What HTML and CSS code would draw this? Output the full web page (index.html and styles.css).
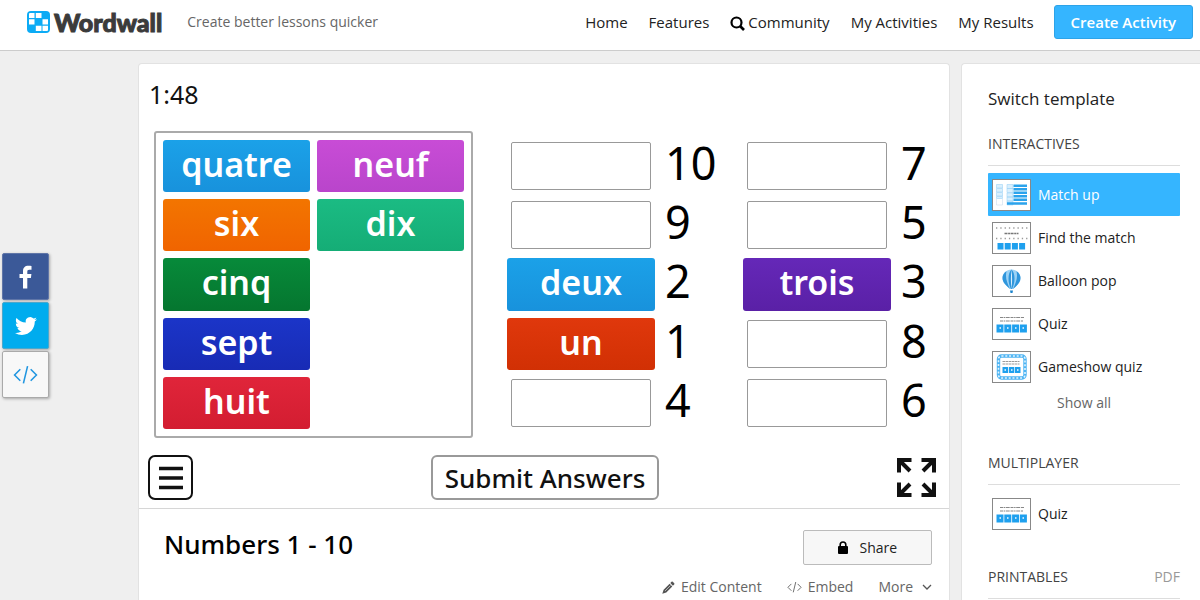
FILE: index.html
```html
<!DOCTYPE html>
<html lang="en">
  <head>
    <meta charset="UTF-8" />
    <meta name="viewport" content="width=device-width, initial-scale=1.0" />
    <title>Numbers 1 - 10</title>
    <link rel="stylesheet" href="styles.css">
  </head>
  <body>
    <!-- shapes used more than once -->
    <svg class="defs" aria-hidden="true">
      <symbol id="code" viewBox="0 0 24 18">
        <path d="M7 4 1.500 9.500 7 15M17 4l5.500 5.500L17 15M14 1 10 17.500" fill="none" stroke="currentColor" stroke-width="1.500" />
      </symbol>
      <symbol id="quiz-thumb" viewBox="0 0 37 30">
        <path d="M7 8.500h24M7 12h23" stroke="#888" stroke-width="1.200" stroke-dasharray="3 .6 1.500 .6 4 .8" />
        <path d="M3.500 15.500h7v8h-7zM11.300 15.500h7v8h-7zM19.100 15.500h7v8h-7zM26.900 15.500h7v8h-7z" fill="#1ea0ee" />
        <path d="M6.500 19h1.500M14 19h1.500M22 19h1.500M29.500 19h1.500" stroke="#bfe4fc" stroke-width="2" />
      </symbol>
    </svg>

    <header class="topbar">
      <a href="#" class="logo">
        <svg width="23" height="22" viewBox="0 0 23 22" aria-hidden="true">
          <rect width="23" height="22" rx="4" fill="#0cabf5" />
          <path d="M3 2h4.500v5H2V3q0-1 1-1zM8.800 2h5.700v5H8.800zM2 8.200h5.500v5.300H2zM15.500 8.200H21v5.300h-5.500zM8.800 14.700h5.700V20H8.800zM15.500 14.700H21V19q0 1-1 1h-4.500z" fill="#fff" />
        </svg>
        <span class="wordmark">Wordwall</span>
      </a>
      <span class="slogan">Create better lessons quicker</span>
      <nav class="nav">
        <a href="#">Home</a>
        <a href="#">Features</a>
        <a href="#"><svg class="search" width="15" height="15" viewBox="0 0 15 15" aria-hidden="true"><circle cx="6.500" cy="6.500" r="5" fill="none" stroke="#000" stroke-width="2.200" /><path d="m10 10 4 4" stroke="#000" stroke-width="2.600" /></svg>Community</a>
        <a href="#">My Activities</a>
        <a href="#">My Results</a>
      </nav>
      <button class="create">Create Activity</button>
    </header>

    <div class="social">
      <a href="#" class="social-btn facebook" aria-label="Facebook">
        <svg width="14" height="24" viewBox="0 0 14 24"><path d="M4 23.500V13H.5V9H4V6.200C4 2.700 6 .8 9.300.8c1.500 0 2.900.1 3.200.2v3.700h-2.200C8.600 4.700 8.300 5.500 8.300 6.700V9h4.100l-.5 4H8.300v10.500z" fill="#fff" /></svg>
      </a>
      <a href="#" class="social-btn twitter" aria-label="Twitter">
        <svg width="22" height="22" viewBox="0 0 24 24"><path d="M23.950 4.570a10 10 0 0 1-2.820.77 4.960 4.960 0 0 0 2.160-2.720c-.95.550-2 .95-3.130 1.180a4.920 4.920 0 0 0-8.380 4.480C7.690 8.090 4.070 6.130 1.640 3.160a4.820 4.820 0 0 0-.67 2.480c0 1.710.87 3.210 2.190 4.100a4.900 4.900 0 0 1-2.230-.62v.06a4.920 4.920 0 0 0 3.950 4.830 5 5 0 0 1-2.210.08 4.940 4.940 0 0 0 4.600 3.420A9.870 9.870 0 0 1 0 19.540a13.940 13.940 0 0 0 7.550 2.210c9.050 0 14-7.500 14-13.980 0-.21 0-.42-.02-.63a9.940 9.940 0 0 0 2.460-2.550z" fill="#fff" /></svg>
      </a>
      <a href="#" class="social-btn embed" aria-label="Embed">
        <svg width="25" height="19"><use href="#code" /></svg>
      </a>
    </div>

    <div class="page">
      <main class="activity">
        <div class="timer">1:48</div>
        <div class="board">
          <div class="tray">
            <button class="tile blue">quatre</button>
            <button class="tile pink">neuf</button>
            <button class="tile orange">six</button>
            <button class="tile mint">dix</button>
            <button class="tile green first">cinq</button>
            <button class="tile navy first">sept</button>
            <button class="tile red first">huit</button>
          </div>
          <div class="answers">
            <div class="pair"><div class="slot"></div><span class="number">10</span></div>
            <div class="pair"><div class="slot"></div><span class="number">7</span></div>
            <div class="pair"><div class="slot"></div><span class="number">9</span></div>
            <div class="pair"><div class="slot"></div><span class="number">5</span></div>
            <div class="pair"><button class="tile blue">deux</button><span class="number">2</span></div>
            <div class="pair"><button class="tile purple">trois</button><span class="number">3</span></div>
            <div class="pair"><button class="tile rust">un</button><span class="number">1</span></div>
            <div class="pair"><div class="slot"></div><span class="number">8</span></div>
            <div class="pair"><div class="slot"></div><span class="number">4</span></div>
            <div class="pair"><div class="slot"></div><span class="number">6</span></div>
          </div>
        </div>
        <div class="controls">
          <button class="menu" aria-label="Menu">
            <svg width="24" height="24" viewBox="0 0 24 24"><path d="M0 2.500h24M0 12h24M0 21.500h24" stroke="#111" stroke-width="3.500" /></svg>
          </button>
          <button class="submit">Submit Answers</button>
          <button class="fullscreen" aria-label="Fullscreen">
            <svg width="39" height="39" viewBox="0 0 39 39"><path d="M2 14.500V2h12.500M3 3l10 10M24.500 2H37v12.500M36 3 26 13M2 24.500V37h12.500M3 36l10-10M24.500 37H37V24.500M36 36 26 26" fill="none" stroke="#111" stroke-width="4" /></svg>
          </button>
        </div>
        <div class="details">
          <div class="details-row">
            <h1>Numbers 1 - 10</h1>
            <button class="share">
              <svg width="10" height="13" viewBox="0 0 10 13" aria-hidden="true"><rect y="5" width="10" height="8" rx="1" /><path d="M2.200 6V3.800a2.800 2.800 0 0 1 5.600 0V6" fill="none" stroke="#000" stroke-width="1.600" /></svg>
              Share
            </button>
          </div>
          <div class="tools">
            <a href="#"><svg width="13" height="13" viewBox="0 0 13 13" aria-hidden="true"><path d="M9.500.8q.6-.6 1.300 0l1.400 1.400q.6.600 0 1.300l-1.300 1.200L8.300 2zM7.600 2.700l2.700 2.700-6 6L.3 12.700l1.300-4z" fill="#555" /><path d="m3 10 5.500-5.500" stroke="#ccc" stroke-width=".8" /></svg>Edit Content</a>
            <a href="#"><svg width="15" height="12"><use href="#code" /></svg>Embed</a>
            <a href="#">More<svg class="chevron" width="10" height="6" viewBox="0 0 10 6" aria-hidden="true"><path d="m1 1 4 4 4-4" fill="none" stroke="#555" stroke-width="1.300" /></svg></a>
          </div>
        </div>
      </main>

      <aside class="sidebar">
        <h2>Switch template</h2>
        <h3>INTERACTIVES</h3>
        <a href="#" class="template active">
          <svg class="thumb" viewBox="0 0 37 30">
            <path d="M3.500 4.500h6v3.500h-6zM3.500 8.500h6V12h-6zM3.500 12.500h6V16h-6zM3.500 16.500h6v2h-6zM14 4.500h6v4h-6zM14 8.500h6v4h-6zM14 13h6v4h-6zM14 17h6v4h-6zM14 21h6v4h-6z" fill="#d9effd" stroke="#9fd3f6" stroke-width=".6" />
            <path d="M3.500 19v6h6v-6" fill="none" stroke="#cde" stroke-width=".6" />
            <path d="M20.500 5.800h13.500M20.500 9.300h13.500M20.500 12.800h13.500M20.500 16.300h13.500M20.500 19.800h13.500M14 23.500h20" stroke="#2ba3ec" stroke-width="2.600" />
          </svg>
          Match up
        </a>
        <a href="#" class="template">
          <svg class="thumb" viewBox="0 0 37 30">
            <path d="M3 5h32M3 15.500h32" stroke="#999" stroke-width="1.300" stroke-dasharray="1.300 3" />
            <path d="M11.500 10.500h14" stroke="#777" stroke-width="1.500" stroke-dasharray="3 .6 2 .5" />
            <path d="M4.500 20h6v6.500h-6zM11.700 20h6v6.500h-6zM18.900 20h6v6.500h-6zM26.100 20h6v6.500h-6z" fill="#1ea0ee" />
          </svg>
          Find the match
        </a>
        <a href="#" class="template">
          <svg class="thumb" viewBox="0 0 37 30">
            <path d="M18.500 3.500c-5 0-9 4-9 8.500 0 5 4 7.500 7.500 11h3c3.500-3.500 7.500-6 7.500-11 0-4.500-4-8.500-9-8.500z" fill="#9bd2f5" />
            <path d="M13.500 5.300c-2.600 1.600-4 4-4 6.700 0 5 4 7.500 7.500 11-3-7-5-11-3.500-17.700zM18.500 3.500c-2 2-3 5-3 9 0 4 1 7.500 2.500 10.500h1c1.500-3 2.500-6.500 2.500-10.500 0-4-1-7-3-9zM23.500 5.300c2.600 1.600 4 4 4 6.700 0 5-4 7.500-7.500 11 3-7 5-11 3.500-17.700z" fill="#2f96dc" />
            <path d="M18.500 3.500c-.8 6-.8 13 0 19.500.8-6.500.8-13.500 0-19.500z" fill="#d8effd" />
            <path d="M17 24.500h3L19.500 27h-2z" fill="#1b83cc" />
          </svg>
          Balloon pop
        </a>
        <a href="#" class="template">
          <svg class="thumb"><use href="#quiz-thumb" /></svg>
          Quiz
        </a>
        <a href="#" class="template">
          <svg class="thumb" viewBox="0 0 37 30">
            <rect x="5.500" y="4" width="26.500" height="22" rx="3" fill="none" stroke="#4db4f3" stroke-width="3.400" />
            <rect x="5.500" y="4" width="26.500" height="22" rx="3" fill="none" stroke="#e4f4fe" stroke-width="1.600" stroke-dasharray="2 1.800" />
            <path d="M9.500 9.500h17M9.500 12h17" stroke="#9b9b9b" stroke-width="1.200" stroke-dasharray="3 .5 2 .5" />
            <path d="M9.500 15h5.500v6H9.500zM15.800 15h5.500v6h-5.500zM22 15h5.500v6H22z" fill="#1ea0ee" />
            <path d="M11.500 18h1.500M18 18h1.500M24 18h1.500" stroke="#bfe4fc" stroke-width="2" />
          </svg>
          Gameshow quiz
        </a>
        <a href="#" class="show-all">Show all</a>

        <h3>MULTIPLAYER</h3>
        <a href="#" class="template">
          <svg class="thumb"><use href="#quiz-thumb" /></svg>
          Quiz
        </a>

        <h3 class="printables">PRINTABLES <span>PDF</span></h3>
      </aside>
    </div>
  </body>
</html>
```

FILE: styles.css
```css
* {
  box-sizing: border-box;
}
body {
  margin: 0;
  min-height: 100vh;
  display: flex;
  flex-direction: column;
  background: #efefef;
  color: #222;
  font-family: "Open Sans", "Noto Sans", sans-serif;
  font-size: 14px;
  line-height: 20px;
}
a {
  color: inherit;
  text-decoration: none;
}
button {
  font-family: inherit;
  cursor: pointer;
}
.defs {
  position: absolute;
  width: 0;
  height: 0;
}

/* top bar */
.topbar {
  display: flex;
  align-items: center;
  height: 51px;
  padding: 0 7px 6px 27px;
  background: #fff;
  border-bottom: 1px solid #ccc;
}
.logo {
  display: flex;
  align-items: center;
  gap: 4px;
}
.wordmark {
  color: #3b3b3b;
  font-family: Lato, sans-serif;
  font-size: 25px;
  font-weight: 900;
  -webkit-text-stroke: 1px #3b3b3b;
}
.slogan {
  margin-left: 25px;
  color: #666;
}
.nav {
  display: flex;
  gap: 21px;
  margin-left: auto;
  font-size: 15px;
}
.search {
  margin-right: 3px;
  vertical-align: -3px;
}
.create {
  height: 34px;
  margin-left: 20px;
  padding: 0 16px;
  color: #fff;
  background: #35b5ff;
  border: 1px solid #2da3e8;
  border-radius: 3px;
  font-size: 15px;
  font-weight: 600;
}

/* share buttons on the left edge */
.social {
  position: fixed;
  top: 253px;
  left: 2px;
  display: flex;
  flex-direction: column;
  gap: 2px;
}
.social-btn {
  display: flex;
  align-items: center;
  justify-content: center;
  width: 47px;
  height: 47px;
  border: 1px solid #aaa;
  border-radius: 2px;
  box-shadow: 1px 1px 3px rgba(0, 0, 0, 0.3);
}
.facebook {
  background: #3b5998;
  border-color: #6076a8;
}
.twitter {
  background: #00acee;
  border-color: #4aa8cc;
}
.embed {
  background: #f8f8f8;
  color: #2196e0;
}

.page {
  flex: 1;
  display: grid;
  grid-template-columns: 812fr 239fr;
  gap: 11px;
  padding: 12px 0 0 138px;
}

/* activity */
.activity {
  background: #fff;
  border: 1px solid #e2e2e2;
  border-bottom: none;
  border-radius: 4px 4px 0 0;
  color: #111;
  font-family: "Noto Sans", "Open Sans", sans-serif;
}
.timer {
  padding: 13px 10px 0;
  font-size: 25px;
  line-height: 34px;
}
.board {
  display: grid;
  grid-template-columns: 319fr 442fr;
  gap: 34px;
  height: 307px;
  margin: 20px 0 0 15px;
}
.tray, .answers {
  display: grid;
  grid-template-rows: repeat(5, 1fr);
  gap: 7px;
}
.tray {
  grid-template-columns: 1fr 1fr;
  padding: 7px;
  border: 2px solid #aaa;
  border-radius: 3px;
}
.answers {
  grid-template-columns: 236fr 206fr;
  column-gap: 0;
  padding: 9px 0;
}
.first {
  grid-column: 1;
}
.pair {
  display: flex;
  align-items: center;
}
.pair .tile {
  width: 148px;
  height: 100%;
  margin-right: 4px;
}
.slot {
  width: 140px;
  height: 48px;
  margin: 0 8px 0 4px;
  border: 1px solid #999;
  border-radius: 2px;
}
.number {
  margin-left: 6px;
  padding-bottom: 6px;
  font-size: 45px;
  line-height: 46px;
  color: #000;
}
.tile {
  padding: 0 0 4px;
  border: none;
  border-radius: 3px;
  color: #fff;
  font-size: 34px;
  font-weight: 600;
  line-height: 44px;
}
.blue { background: linear-gradient(#1ba1e8, #1892dc); }
.pink { background: linear-gradient(#c84cd6, #b945cb); }
.orange { background: linear-gradient(#f37500, #f06400); }
.mint { background: linear-gradient(#1bbb83, #15ad76); }
.green { background: linear-gradient(#078a3a, #05762f); }
.navy { background: linear-gradient(#1b35c8, #182bb5); }
.red { background: linear-gradient(#e0253a, #d31d31); }
.purple { background: linear-gradient(#6528b8, #5a20a6); }
.rust { background: linear-gradient(#e0380c, #d13004); }

.controls {
  display: flex;
  align-items: center;
  justify-content: space-between;
  padding: 17px 13px 8px 9px;
  border-bottom: 1px solid #d6d6d6;
}
.menu {
  display: flex;
  align-items: center;
  justify-content: center;
  width: 45px;
  height: 45px;
  padding: 0;
  background: #fff;
  border: 2px solid #111;
  border-radius: 7px;
}
.submit {
  height: 45px;
  padding: 0 12px;
  background: #fff;
  border: 2px solid #999;
  border-radius: 6px;
  color: #111;
  font-size: 26px;
  font-weight: 500;
}
.fullscreen {
  display: flex;
  padding: 0;
  background: none;
  border: none;
}

/* title and tools under the game */
.details {
  padding: 21px 17px 12px 25px;
}
.details-row {
  display: flex;
  justify-content: space-between;
}
h1 {
  margin: 0;
  font-size: 26px;
  font-weight: 500;
  line-height: 28px;
  color: #000;
}
.share {
  width: 129px;
  height: 35px;
  background: #f7f7f7;
  border: 1px solid #bbb;
  border-radius: 2px;
  font-family: "Open Sans", sans-serif;
  font-size: 14px;
  color: #222;
}
.share svg {
  margin-right: 8px;
  vertical-align: -1px;
}
.tools {
  display: flex;
  justify-content: flex-end;
  gap: 25px;
  margin-top: 12px;
  color: #666;
  font-family: "Open Sans", sans-serif;
}
.tools a {
  display: flex;
  align-items: center;
  gap: 6px;
}
.tools .chevron {
  margin-left: 3px;
}

/* templates */
.sidebar {
  padding: 24px 20px 0 26px;
  background: #fff;
  border: 1px solid #e2e2e2;
  border-width: 1px 0 0 1px;
  border-radius: 4px 0 0 0;
}
h2 {
  margin: 0 0 24px;
  font-size: 17px;
  font-weight: 400;
  line-height: 22px;
}
h3 {
  margin: 0 0 7px;
  padding-bottom: 11px;
  border-bottom: 1px solid #ddd;
  color: #444;
  font-size: 14px;
  font-weight: 400;
  line-height: 20px;
}
.template {
  display: flex;
  align-items: center;
  gap: 7px;
  height: 43px;
  padding: 0 4px;
}
.template.active {
  color: #fff;
  background: #35b5ff;
  border-radius: 1px;
}
.thumb {
  width: 39px;
  height: 32px;
  background: #fff;
  border: 1px solid #888;
}
.show-all {
  display: block;
  margin: 5px 0 40px;
  color: #666;
  text-align: center;
}
.printables {
  display: flex;
  justify-content: space-between;
  margin-top: 32px;
}
.printables span {
  color: #999;
}
```
